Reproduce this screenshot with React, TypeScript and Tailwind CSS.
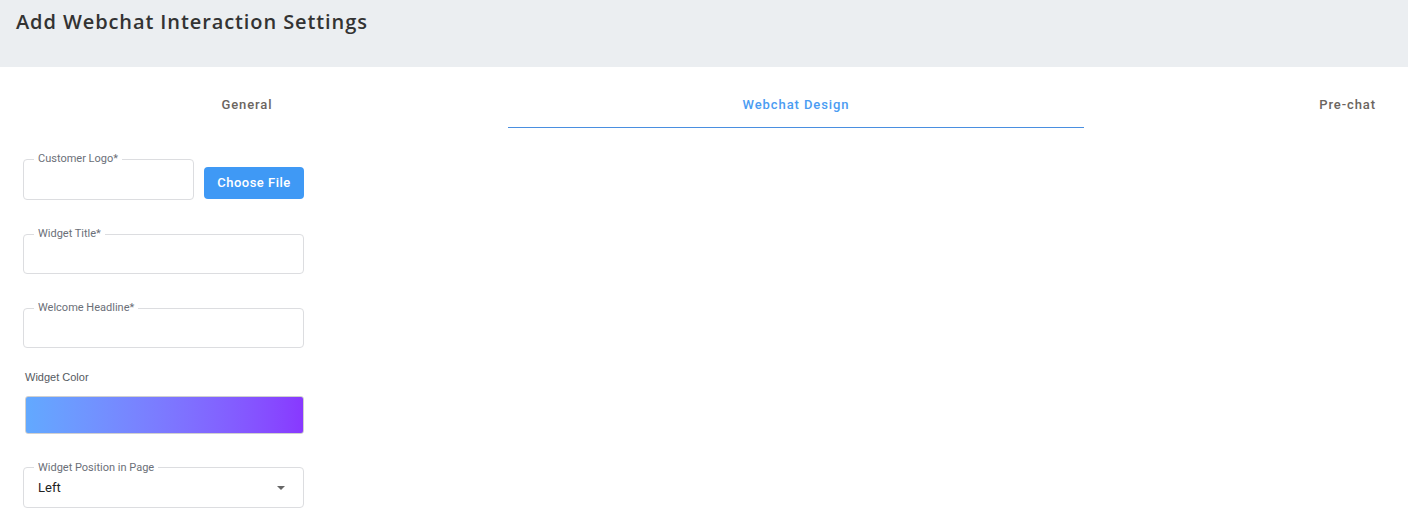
function OutlinedField({
  label,
  width = "w-[281px]",
  height = "h-[46px]",
  children,
}: {
  label: string;
  width?: string;
  height?: string;
  children?: React.ReactNode;
}) {
  return (
    <fieldset
      className={`${width} ${height} -mt-[6px] border border-[#dcdde0] rounded-[4px] pl-[10px] pr-[10px] flex items-center`}
    >
      <legend className="px-[4px] text-[11px] leading-[12px] text-[#6b6f78]">
        {label}
      </legend>
      {children}
    </fieldset>
  );
}

export default function App() {
  return (
    <div className="min-h-screen bg-white font-['Roboto',sans-serif]">
      {/* header */}
      <div className="h-[67px] bg-[#ebeef1] px-[16px] pt-[7px]">
        <h1 className="font-['Open_Sans',sans-serif] text-[20px] font-semibold text-[#333] tracking-[0.9px]">
          Add Webchat Interaction Settings
        </h1>
      </div>

      {/* tabs */}
      <div className="flex h-[61px] text-[13px] font-medium tracking-[0.9px]">
        <div className="w-[494px] flex items-end justify-center pb-[14px] text-[#6b6560]">
          General
        </div>
        <div className="ml-[14px] w-[576px] flex items-end justify-center pb-[13px] text-[#4b9cf2] border-b border-[#4a8fe0]">
          Webchat Design
        </div>
        <div className="flex-1 flex items-end justify-end pb-[14px] pr-[32px] text-[#6b6560]">
          Pre-chat
        </div>
      </div>

      {/* form */}
      <div className="pl-[23px] pt-[31px] flex flex-col">
        <div className="flex items-end gap-[10px]">
          <OutlinedField label="Customer Logo*" width="w-[171px]" height="h-[47px]" />
          <button className="mb-[1px] w-[100px] h-[32px] rounded-[4px] bg-[#3f99f5] text-white text-[13px] font-medium tracking-[0.5px]">
            Choose File
          </button>
        </div>

        <div className="mt-[34px]">
          <OutlinedField label="Widget Title*" />
        </div>
        <div className="mt-[34px]">
          <OutlinedField label="Welcome Headline*" />
        </div>

        <div className="mt-[21px] pl-[2px] text-[11px] text-[#555a61] font-['Liberation_Sans',sans-serif]">
          Widget Color
        </div>
        <div className="mt-[10px] ml-[2px] w-[279px] h-[38px] rounded-[3px] border border-[#d0d0d0] bg-gradient-to-r from-[#62a9ff] to-[#8838ff]" />

        <div className="mt-[34px]">
          <OutlinedField label="Widget Position in Page">
            <div className="flex-1 flex items-center justify-between pl-[4px] pb-[4px]">
              <span className="text-[13px] text-[#222]">Left</span>
              <svg width="8" height="4" viewBox="0 0 8 4" className="mr-[8px]">
                <path d="M0 0h8L4 4z" fill="#666" />
              </svg>
            </div>
          </OutlinedField>
        </div>
      </div>
    </div>
  );
}
